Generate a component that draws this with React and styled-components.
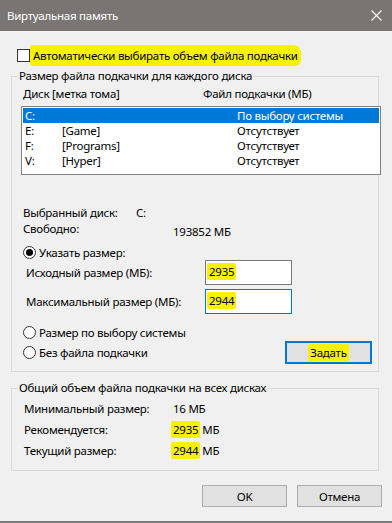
import React from "react";
import styled, { createGlobalStyle } from "styled-components";

const Global = createGlobalStyle`
  html, body { margin: 0; padding: 0; background: #f0f0f0; }
  body { font-family: "Noto Sans", "Open Sans", sans-serif; font-size: 11.5px; letter-spacing: -0.25px; color: #000; }
  * { box-sizing: border-box; }
`;

const Window = styled.div`
  width: 392px;
  height: 523px;
  display: flex;
  flex-direction: column;
  background: #f0f0f0;
  border-bottom: 2px solid #7a7a7a;
  overflow: hidden;
  line-height: 15px;
`;

const TitleBar = styled.div`
  height: 31px;
  flex: none;
  background: #7a7574;
  color: #fff;
  display: flex;
  align-items: center;
  justify-content: space-between;
  padding: 0 10px 0 7px;
`;

const Body = styled.div`
  flex: 1;
  display: flex;
  flex-direction: column;
  padding-top: 15px;
`;

const CheckRow = styled.label`
  display: flex;
  align-items: center;
  height: 18px;
  padding-left: 17px;
  gap: 3px;
`;

const CheckBox = styled.span`
  width: 13px;
  height: 13px;
  border: 1px solid #333;
  background: #fff;
  flex: none;
`;

const Mark = styled.span`
  background: #f6f200;
  padding: ${(p) => p.$pad || "1px 2px"};
  margin: ${(p) => p.$margin || "0 -2px"};
  border-radius: ${(p) => p.$radius || "2px"};
`;

const Group = styled.fieldset`
  margin: ${(p) => p.$top}px 13px 0 11px;
  padding: 0 0 ${(p) => p.$bottom}px 9px;
  border: 1px solid #d9d9d9;
  min-width: 0;
  display: flex;
  flex-direction: column;
`;

const Legend = styled.legend`
  margin-left: -3px;
  padding: 0 1px;
  line-height: 16px;
`;

const HeaderRow = styled.div`
  display: grid;
  grid-template-columns: 180px 1fr;
  padding-left: 2px;
  margin-top: 2px;
  height: 16px;
  line-height: 16px;
`;

const ListBox = styled.div`
  margin: 4px -3px 0 0;
  height: 69px;
  border: 1px solid #828282;
  background: #fff;
  padding: 1px;
`;

const ListRow = styled.div`
  display: grid;
  grid-template-columns: 37px 175px 1fr;
  height: 15px;
  line-height: 15px;
  padding-left: 2px;
  background: ${(p) => (p.$selected ? "#0078d7" : "transparent")};
  color: ${(p) => (p.$selected ? "#fff" : "#000")};
`;

const InfoRow = styled.div`
  display: grid;
  grid-template-columns: ${(p) => p.$label}px 1fr;
  padding-left: 2px;
  height: 16px;
  line-height: 16px;
  margin-top: ${(p) => p.$mt || 0}px;
`;

const InfoValue = styled.span`
  padding-top: ${(p) => p.$offset || 0}px;
`;

const RadioRow = styled.div`
  display: flex;
  align-items: center;
  justify-content: space-between;
  padding-left: 2px;
  height: ${(p) => p.$h || 16}px;
  margin-top: ${(p) => p.$mt || 0}px;
`;

const RadioLabel = styled.label`
  display: flex;
  align-items: center;
  gap: 3px;
`;

const Radio = styled.span`
  width: 13px;
  height: 13px;
  border-radius: 50%;
  border: 1px solid #333;
  background: #fff;
  display: flex;
  align-items: center;
  justify-content: center;
  flex: none;
  &::after {
    content: "";
    width: 7px;
    height: 7px;
    border-radius: 50%;
    background: ${(p) => (p.$checked ? "#000" : "transparent")};
  }
`;

const FieldRow = styled.div`
  display: flex;
  align-items: center;
  padding-left: 5px;
  height: 25px;
  margin-top: ${(p) => p.$mt || 0}px;
`;

const FieldLabel = styled.span`
  width: 179px;
`;

const Input = styled.div`
  width: 87px;
  height: 25px;
  background: #fff;
  border: 1px solid ${(p) => (p.$focus ? "#0078d7" : "#7a7a7a")};
  padding: 3px 0 0 3px;
  line-height: 15px;
`;

const Button = styled.button`
  font: inherit;
  letter-spacing: inherit;
  color: #000;
  width: ${(p) => p.$w || 85}px;
  height: ${(p) => p.$h || 22}px;
  background: #e1e1e1;
  border: ${(p) => (p.$default ? "2px solid #0078d7" : "1px solid #adadad")};
  margin-right: ${(p) => p.$mr || 0}px;
  padding: 0;
  line-height: 15px;
`;

const SummaryRow = styled.div`
  display: grid;
  grid-template-columns: 149px 1fr;
  padding-left: 3px;
  height: 21px;
  align-items: center;
`;

const SummaryRows = styled.div`
  margin-top: 2px;
  display: flex;
  flex-direction: column;
`;

const Footer = styled.div`
  display: flex;
  justify-content: flex-end;
  gap: 10px;
  padding-right: 10px;
  margin-top: 14px;
`;

const CloseIcon = () => (
  <svg width="11" height="11" viewBox="0 0 11 11">
    <path d="M0.5 0.5 L10.5 10.5 M10.5 0.5 L0.5 10.5" stroke="#fff" strokeWidth="1.1" />
  </svg>
);

export default function App() {
  const disks = [
    { d: "C:", l: "", s: "По выбору системы", sel: true },
    { d: "E:", l: "[Game]", s: "Отсутствует" },
    { d: "F:", l: "[Programs]", s: "Отсутствует" },
    { d: "V:", l: "[Hyper]", s: "Отсутствует" },
  ];
  return (
    <>
      <Global />
      <Window>
        <TitleBar>
          <span>Виртуальная память</span>
          <CloseIcon />
        </TitleBar>
        <Body>
          <CheckRow>
            <CheckBox />
            <Mark $pad="3px 3px" $margin="0 -3px" $radius="3px 8px 6px 3px">
              Автоматически выбирать объем файла подкачки
            </Mark>
          </CheckRow>

          <Group $top={4} $bottom={7}>
            <Legend>Размер файла подкачки для каждого диска</Legend>
            <HeaderRow>
              <span>Диск [метка тома]</span>
              <span>Файл подкачки (МБ)</span>
            </HeaderRow>
            <ListBox>
              {disks.map((r) => (
                <ListRow key={r.d} $selected={r.sel}>
                  <span>{r.d}</span>
                  <span>{r.l}</span>
                  <span>{r.s}</span>
                </ListRow>
              ))}
            </ListBox>
            <InfoRow $label={113} $mt={30}>
              <span>Выбранный диск:</span>
              <span>C:</span>
            </InfoRow>
            <InfoRow $label={150}>
              <span>Свободно:</span>
              <InfoValue $offset={3}>193852 МБ</InfoValue>
            </InfoRow>
            <RadioRow $mt={7}>
              <RadioLabel>
                <Radio $checked />
                Указать размер:
              </RadioLabel>
            </RadioRow>
            <FieldRow>
              <FieldLabel>Исходный размер (МБ):</FieldLabel>
              <Input>
                <Mark>2935</Mark>
              </Input>
            </FieldRow>
            <FieldRow $mt={4}>
              <FieldLabel>Максимальный размер (МБ):</FieldLabel>
              <Input $focus>
                <Mark>2944</Mark>
              </Input>
            </FieldRow>
            <RadioRow $mt={10}>
              <RadioLabel>
                <Radio />
                Размер по выбору системы
              </RadioLabel>
            </RadioRow>
            <RadioRow $mt={1} $h={23}>
              <RadioLabel>
                <Radio />
                Без файла подкачки
              </RadioLabel>
              <Button $default $w={87} $h={23} $mr={6}>
                <Mark>Задать</Mark>
              </Button>
            </RadioRow>
          </Group>

          <Group $top={8} $bottom={9}>
            <Legend>Общий объем файла подкачки на всех дисках</Legend>
            <SummaryRows>
              <SummaryRow>
                <span>Минимальный размер:</span>
                <span>16 МБ</span>
              </SummaryRow>
              <SummaryRow>
                <span>Рекомендуется:</span>
                <span>
                  <Mark $margin="0 2px 0 -2px">2935</Mark>МБ
                </span>
              </SummaryRow>
              <SummaryRow>
                <span>Текущий размер:</span>
                <span>
                  <Mark $margin="0 2px 0 -2px">2944</Mark>МБ
                </span>
              </SummaryRow>
            </SummaryRows>
          </Group>

          <Footer>
            <Button>OK</Button>
            <Button>Отмена</Button>
          </Footer>
        </Body>
      </Window>
    </>
  );
}
